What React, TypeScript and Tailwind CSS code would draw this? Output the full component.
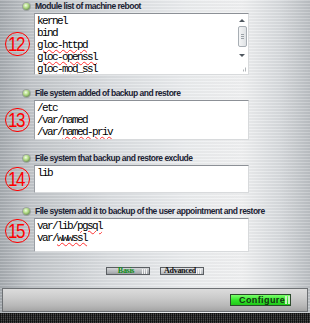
import React from 'react';

type Line = { text: string; bad?: boolean }[];

const Bullet: React.FC = () => (
  <span className="block w-[7px] h-[7px] rounded-full bg-[radial-gradient(circle_at_40%_35%,#f4ffe6_0%,#a8d47a_45%,#6d8a5a_75%,#8a9088_100%)] shadow-[0_0_0_1px_rgba(120,130,120,0.5)]" />
);

const Circled: React.FC<{ n: number }> = ({ n }) => (
  <div className="w-[25px] h-[24px] rounded-full border-[1.5px] border-[#ff0000] flex items-center justify-center text-[#ff0000] text-[17px] leading-none tracking-[-1.5px] font-['Liberation_Sans',sans-serif] bg-[rgba(255,255,255,0.05)]">
    <span className="-ml-[2px] scale-y-[1.15]">{n}</span>
  </div>
);

const Lines: React.FC<{ lines: Line[] }> = ({ lines }) => (
  <div className="px-[2px] pt-[1px] font-['Liberation_Mono',monospace] text-[11px] leading-[12px] tracking-[-1.6px] text-black whitespace-pre">
    {lines.map((l, i) => (
      <div key={i}>
        {l.map((p, j) => (
          <span
            key={j}
            className={p.bad ? 'underline decoration-wavy decoration-[#ff3030] decoration-[1px] underline-offset-[1px]' : ''}
          >
            {p.text}
          </span>
        ))}
      </div>
    ))}
  </div>
);

const Scrollbar: React.FC = () => (
  <div className="w-[10px] mr-[1px] flex flex-col items-center pt-[4px]">
    <svg width="6" height="4" viewBox="0 0 6 4">
      <path d="M0 4 L3 1 L6 4 Z" fill="#505860" />
    </svg>
    <div className="mt-[4px] w-[9px] h-[21px] rounded-[2px] border border-[#a8aeb4] bg-[linear-gradient(90deg,#f4f5f6,#dfe2e5)] flex flex-col items-center justify-center gap-[1px]">
      <span className="block w-[3px] h-[1px] bg-[#9aa0a6]" />
      <span className="block w-[3px] h-[1px] bg-[#9aa0a6]" />
      <span className="block w-[3px] h-[1px] bg-[#9aa0a6]" />
    </div>
    <svg className="mt-[7px]" width="6" height="4" viewBox="0 0 6 4">
      <path d="M0 0 L3 3 L6 0 Z" fill="#505860" />
    </svg>
    <svg className="mt-[9px] ml-[2px]" width="5" height="5" viewBox="0 0 5 5">
      <path d="M4.5 0.5 V4.5 M2.5 2.5 V4.5" stroke="#b0b4b8" strokeWidth="1" />
    </svg>
  </div>
);

const Section: React.FC<{
  title: string;
  n: number;
  h: string;
  lines: Line[];
  scroll?: boolean;
  circleAlign?: string;
}> = ({ title, n, h, lines, scroll, circleAlign }) => (
  <div>
    <div className="flex items-center h-[12px] pl-[23px] gap-[5px]">
      <Bullet />
      <span className="font-['Liberation_Sans',sans-serif] font-bold text-[8.5px] tracking-[-0.5px] text-[#1b2233] leading-none">
        {title}
      </span>
    </div>
    <div className="flex mt-[1px]">
      <div className={`w-[34px] flex justify-center ${circleAlign ?? 'items-center'}`}>
        <Circled n={n} />
      </div>
      <div
        className={`w-[215px] ${h} bg-white border-t border-l border-t-[#8c9096] border-l-[#9a9ea4] border-b border-r border-b-[#d8dadc] border-r-[#d8dadc] flex overflow-hidden`}
      >
        <div className="flex-1">
          <Lines lines={lines} />
        </div>
        {scroll && <Scrollbar />}
      </div>
    </div>
  </div>
);

const SmallButton: React.FC<{ label: string; green?: boolean }> = ({ label, green }) => (
  <button
    className={`w-[44px] h-[8px] flex items-center justify-between pl-[3px] pr-[2px] border border-[#5a5e62] ${
      green
        ? 'bg-[linear-gradient(180deg,#d4d6d8,#9ea2a6)]'
        : 'bg-[linear-gradient(180deg,#e4e6e8,#b4b8bc)]'
    }`}
  >
    <span
      className={`flex-1 text-center font-['Liberation_Serif',serif] font-bold text-[8px] leading-none tracking-[-0.3px] ${
        green ? 'text-[#0f8a1a]' : 'text-[#101010]'
      }`}
    >
      {label}
    </span>
    <span className="flex gap-[1px]">
      <span className="block w-[1px] h-[5px] bg-[#f4f4f4]" />
      <span className="block w-[1px] h-[5px] bg-[#f4f4f4]" />
      <span className="block w-[1px] h-[5px] bg-[#f4f4f4]" />
    </span>
  </button>
);

export default function App() {
  return (
    <div className="w-[310px] h-[323px] overflow-hidden flex flex-col bg-[repeating-linear-gradient(180deg,rgba(255,255,255,0.18)_0px,rgba(255,255,255,0.18)_1px,rgba(0,0,0,0.03)_1px,rgba(0,0,0,0.03)_3px),linear-gradient(90deg,#a6abb0_0%,#c2c6ca_10%,#dcdfe2_35%,#eceef0_60%,#f1f2f3_78%,#d9dcdf_90%,#bcc0c4_100%)]">
      <div className="flex flex-col gap-[12px]">
        <Section
          title="Module list of machine reboot"
          n={12}
          h="h-[62px]"
          scroll
          lines={[
            [{ text: 'kernel' }],
            [{ text: 'bind' }],
            [{ text: 'gloc-httpd', bad: true }],
            [{ text: 'gloc-openssl', bad: true }],
            [{ text: 'gloc-mod_ssl', bad: true }],
          ]}
        />
        <Section
          title="File system added of backup and restore"
          n={13}
          h="h-[40px]"
          lines={[
            [{ text: '/etc' }],
            [{ text: '/var/named' }],
            [{ text: '/var/' }, { text: 'named-priv', bad: true }],
          ]}
        />
        <Section
          title="File system that backup and restore exclude"
          n={14}
          h="h-[28px]"
          lines={[[{ text: 'lib' }]]}
        />
        <Section
          title="File system add it to backup of the user appointment and restore"
          n={15}
          h="h-[34px]"
          circleAlign="items-start pt-[1px]"
          lines={[
            [{ text: 'var/lib/' }, { text: 'pgsql', bad: true }],
            [{ text: 'var/' }, { text: 'wwwssl', bad: true }],
          ]}
        />
      </div>

      <div className="flex justify-center gap-[10px] mt-[15px]">
        <SmallButton label="Basis" green />
        <SmallButton label="Advanced" />
      </div>

      <div className="mt-[13px] mx-[2px] h-[24px] border border-[#6e7174] bg-[linear-gradient(180deg,#dcdcdc_0%,#cbcbcb_40%,#b8b8b8_75%,#a4a4a4_100%)] flex items-center justify-end pr-[16px]">
        <button className="w-[61px] h-[12px] border border-[#2c4a2c] bg-[linear-gradient(180deg,#7dff6e_0%,#33e62a_50%,#20c81a_100%)] flex items-center pl-[8px] pr-[3px]">
          <span className="flex-1 text-left font-['Liberation_Sans',sans-serif] font-bold text-[9px] leading-none tracking-[0.4px] text-[#123312]">
            Configure
          </span>
          <span className="flex gap-[1px]">
            <span className="block w-[2px] h-[8px] bg-[#c8f0c0]" />
            <span className="block w-[2px] h-[8px] bg-[#c8f0c0]" />
          </span>
        </button>
      </div>

      <div className="flex-1 mt-[1px] bg-[repeating-linear-gradient(90deg,#1a1a1a_0px,#1a1a1a_1px,#4a4a4a_1px,#4a4a4a_2px)]">
        <div className="h-full bg-[repeating-linear-gradient(180deg,rgba(0,0,0,0.35)_0px,rgba(0,0,0,0.35)_1px,transparent_1px,transparent_2px)]" />
      </div>
    </div>
  );
}
